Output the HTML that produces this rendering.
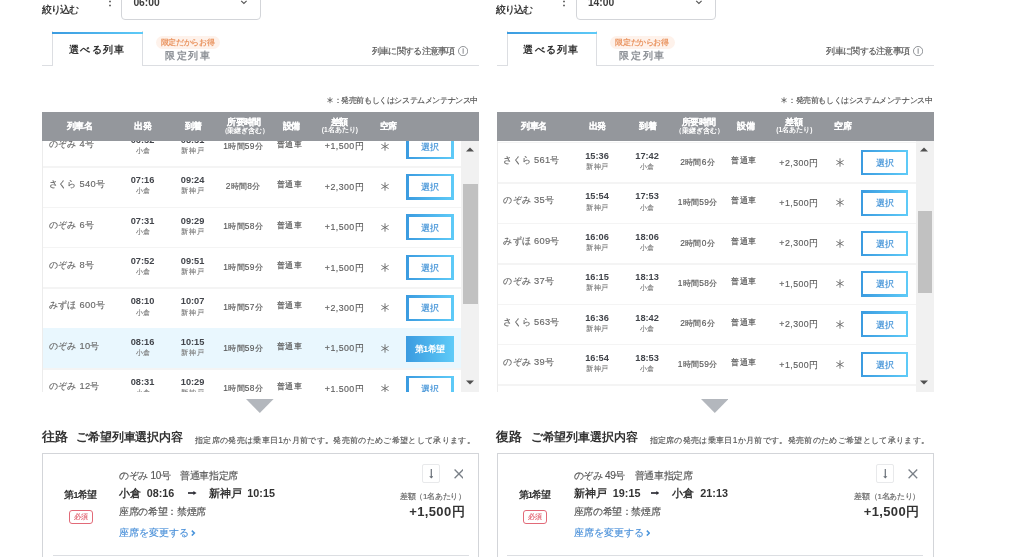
<!DOCTYPE html>
<html lang="ja"><head><meta charset="utf-8"><title>列車選択</title>
<style>
html,body{margin:0;padding:0;background:#fff;width:1024px;height:557px;overflow:hidden;position:relative}
body{font-family:"Liberation Sans",sans-serif}
.t{position:absolute;white-space:nowrap}
.n{-webkit-text-stroke:0.15px currentColor}
.b{position:absolute}
</style></head><body>
<div id="wrap" style="position:absolute;left:0;top:0;width:1024px;height:557px;overflow:hidden;will-change:transform">
<div class="t" style="left:41.50px;top:2.68px;font-size:9.6px;line-height:13.44px;color:#3c3c3c;font-weight:bold;letter-spacing:-0.95px;">絞り込む</div>
<div class="t" style="left:-40.40px;width:300px;text-align:center;top:-4.40px;font-size:10px;line-height:14.00px;color:#444;font-weight:bold;">：</div>
<div class="b" style="left:121.00px;top:-12.00px;width:140.00px;height:31.60px;border:1px solid #d3d5d9;border-radius:4px;box-sizing:border-box;background:#fff"></div>
<div class="t" style="left:133.40px;top:-3.91px;font-size:10.3px;line-height:14.42px;color:#3c3c3c;font-weight:bold;">06:00</div>
<svg class="b" style="left:240.00px;top:-1.2px" width="8" height="6" viewBox="0 0 8 6"><path d="M1.2 1.8 L3.9 4.5 L6.6 1.8" fill="none" stroke="#555" stroke-width="1.1"/></svg>
<div class="b" style="left:42.00px;top:64.60px;width:437.00px;height:1.20px;background:#dcdee2"></div>
<div class="b" style="left:52.20px;top:31.30px;width:90.50px;height:34.50px;background:#fff;border-left:1px solid #dcdee2;border-right:1px solid #dcdee2;box-sizing:border-box"></div>
<div class="b" style="left:52.20px;top:31.50px;width:90.50px;height:2.10px;background:linear-gradient(90deg,#3b9be0,#5ecbf8)"></div>
<div class="t" style="left:-52.88px;width:300px;text-align:center;top:42.82px;font-size:10.4px;line-height:14.56px;color:#333;font-weight:bold;letter-spacing:1.25px;">選べる列車</div>
<div class="b" style="left:155.50px;top:36.20px;width:64.50px;height:13.00px;background:#fef2eb;border-radius:7px"></div>
<div class="t" style="left:37.52px;width:300px;text-align:center;top:37.68px;font-size:7.6px;line-height:10.64px;color:#ea9663;font-weight:bold;letter-spacing:-0.35px;">限定だからお得</div>
<div class="t" style="left:38.20px;width:300px;text-align:center;top:48.92px;font-size:10.4px;line-height:14.56px;color:#8d9197;font-weight:bold;letter-spacing:1.60px;">限定列車</div>
<div class="t n" style="left:154.67px;width:300px;text-align:right;top:45.08px;font-size:8.6px;line-height:12.04px;color:#555;font-weight:normal;letter-spacing:-0.73px;">列車に関する注意事項</div>
<svg class="b" style="left:458.10px;top:45.6px" width="10.2" height="10.2" viewBox="0 0 20 20"><circle cx="10" cy="10" r="9.1" fill="none" stroke="#808388" stroke-width="1.7"/><rect x="9.2" y="4.6" width="1.7" height="10.6" fill="#75787d"/></svg>
<div class="t n" style="left:178.00px;width:300px;text-align:right;top:95.07px;font-size:7.9px;line-height:11.06px;color:#555;font-weight:normal;letter-spacing:-0.40px;">：発売前もしくはシステムメンテナンス中</div>
<svg class="b" style="left:326.80px;top:97.3px" width="6" height="6.4" viewBox="0 0 8 9"><path d="M4 0.3 V8.7 M0.4 2.4 L7.6 6.6 M0.4 6.6 L7.6 2.4" stroke="#555" stroke-width="1.1" fill="none"/></svg>
<div class="b" style="left:42.00px;top:141px;width:437px;height:251px;overflow:hidden">
<div class="b" style="left:0.00px;top:0.00px;width:1.00px;height:251.00px;background:#ececec"></div>
<div class="b" style="left:1.00px;top:25.10px;width:418.00px;height:1.60px;background:#f4f4f4"></div>
<div class="t n" style="left:6.80px;top:-3.11px;font-size:9.3px;line-height:13.02px;color:#686868;font-weight:normal;letter-spacing:0.29px;">のぞみ 4号</div>
<div class="t" style="left:-49.50px;width:300px;text-align:center;top:-7.18px;font-size:9.25px;line-height:12.95px;color:#43464c;font-weight:bold;">06:52</div>
<div class="t n" style="left:-49.50px;width:300px;text-align:center;top:4.92px;font-size:7.4px;line-height:10.36px;color:#808080;font-weight:normal;">小倉</div>
<div class="t" style="left:0.60px;width:300px;text-align:center;top:-7.18px;font-size:9.25px;line-height:12.95px;color:#43464c;font-weight:bold;">08:51</div>
<div class="t n" style="left:0.90px;width:300px;text-align:center;top:4.92px;font-size:7.4px;line-height:10.36px;color:#808080;font-weight:normal;letter-spacing:0.60px;">新神戸</div>
<div class="t n" style="left:51.13px;width:300px;text-align:center;top:-0.38px;font-size:8.4px;line-height:11.76px;color:#5a5a5a;font-weight:normal;letter-spacing:0.27px;">1時間59分</div>
<div class="t n" style="left:97.45px;width:300px;text-align:center;top:-2.18px;font-size:8.4px;line-height:11.76px;color:#555;font-weight:normal;letter-spacing:0.30px;">普通車</div>
<div class="t n" style="left:22.15px;width:300px;text-align:right;top:-0.66px;font-size:8.8px;line-height:12.32px;color:#606060;font-weight:normal;letter-spacing:0.45px;">+1,500円</div>
<svg class="b" style="left:339.30px;top:0.80px" width="8" height="9" viewBox="0 0 8 9"><path d="M4 0.3 V8.7 M0.4 2.4 L7.6 6.6 M0.4 6.6 L7.6 2.4" stroke="#666" stroke-width="0.9" fill="none"/></svg>
<div class="b" style="left:364.20px;top:-7.50px;width:47.60px;height:25.80px;background:linear-gradient(90deg,#3b9be0,#5ecbf8)"></div>
<div class="b" style="left:366.60px;top:-5.10px;width:42.80px;height:21.00px;background:#fff"></div>
<div class="t n" style="left:238.00px;width:300px;text-align:center;top:-0.26px;font-size:8.8px;line-height:12.32px;color:#3b8fd6;font-weight:normal;">選択</div>
<div class="b" style="left:1.00px;top:65.50px;width:418.00px;height:1.60px;background:#f4f4f4"></div>
<div class="t n" style="left:6.80px;top:37.29px;font-size:9.3px;line-height:13.02px;color:#686868;font-weight:normal;letter-spacing:0.29px;">さくら 540号</div>
<div class="t" style="left:-49.50px;width:300px;text-align:center;top:33.22px;font-size:9.25px;line-height:12.95px;color:#43464c;font-weight:bold;">07:16</div>
<div class="t n" style="left:-49.50px;width:300px;text-align:center;top:45.32px;font-size:7.4px;line-height:10.36px;color:#808080;font-weight:normal;">小倉</div>
<div class="t" style="left:0.60px;width:300px;text-align:center;top:33.22px;font-size:9.25px;line-height:12.95px;color:#43464c;font-weight:bold;">09:24</div>
<div class="t n" style="left:0.90px;width:300px;text-align:center;top:45.32px;font-size:7.4px;line-height:10.36px;color:#808080;font-weight:normal;letter-spacing:0.60px;">新神戸</div>
<div class="t n" style="left:51.13px;width:300px;text-align:center;top:40.02px;font-size:8.4px;line-height:11.76px;color:#5a5a5a;font-weight:normal;letter-spacing:0.27px;">2時間8分</div>
<div class="t n" style="left:97.45px;width:300px;text-align:center;top:38.22px;font-size:8.4px;line-height:11.76px;color:#555;font-weight:normal;letter-spacing:0.30px;">普通車</div>
<div class="t n" style="left:22.15px;width:300px;text-align:right;top:39.74px;font-size:8.8px;line-height:12.32px;color:#606060;font-weight:normal;letter-spacing:0.45px;">+2,300円</div>
<svg class="b" style="left:339.30px;top:41.20px" width="8" height="9" viewBox="0 0 8 9"><path d="M4 0.3 V8.7 M0.4 2.4 L7.6 6.6 M0.4 6.6 L7.6 2.4" stroke="#666" stroke-width="0.9" fill="none"/></svg>
<div class="b" style="left:364.20px;top:32.90px;width:47.60px;height:25.80px;background:linear-gradient(90deg,#3b9be0,#5ecbf8)"></div>
<div class="b" style="left:366.60px;top:35.30px;width:42.80px;height:21.00px;background:#fff"></div>
<div class="t n" style="left:238.00px;width:300px;text-align:center;top:40.14px;font-size:8.8px;line-height:12.32px;color:#3b8fd6;font-weight:normal;">選択</div>
<div class="b" style="left:1.00px;top:105.90px;width:418.00px;height:1.60px;background:#f4f4f4"></div>
<div class="t n" style="left:6.80px;top:77.69px;font-size:9.3px;line-height:13.02px;color:#686868;font-weight:normal;letter-spacing:0.29px;">のぞみ 6号</div>
<div class="t" style="left:-49.50px;width:300px;text-align:center;top:73.62px;font-size:9.25px;line-height:12.95px;color:#43464c;font-weight:bold;">07:31</div>
<div class="t n" style="left:-49.50px;width:300px;text-align:center;top:85.72px;font-size:7.4px;line-height:10.36px;color:#808080;font-weight:normal;">小倉</div>
<div class="t" style="left:0.60px;width:300px;text-align:center;top:73.62px;font-size:9.25px;line-height:12.95px;color:#43464c;font-weight:bold;">09:29</div>
<div class="t n" style="left:0.90px;width:300px;text-align:center;top:85.72px;font-size:7.4px;line-height:10.36px;color:#808080;font-weight:normal;letter-spacing:0.60px;">新神戸</div>
<div class="t n" style="left:51.13px;width:300px;text-align:center;top:80.42px;font-size:8.4px;line-height:11.76px;color:#5a5a5a;font-weight:normal;letter-spacing:0.27px;">1時間58分</div>
<div class="t n" style="left:97.45px;width:300px;text-align:center;top:78.62px;font-size:8.4px;line-height:11.76px;color:#555;font-weight:normal;letter-spacing:0.30px;">普通車</div>
<div class="t n" style="left:22.15px;width:300px;text-align:right;top:80.14px;font-size:8.8px;line-height:12.32px;color:#606060;font-weight:normal;letter-spacing:0.45px;">+1,500円</div>
<svg class="b" style="left:339.30px;top:81.60px" width="8" height="9" viewBox="0 0 8 9"><path d="M4 0.3 V8.7 M0.4 2.4 L7.6 6.6 M0.4 6.6 L7.6 2.4" stroke="#666" stroke-width="0.9" fill="none"/></svg>
<div class="b" style="left:364.20px;top:73.30px;width:47.60px;height:25.80px;background:linear-gradient(90deg,#3b9be0,#5ecbf8)"></div>
<div class="b" style="left:366.60px;top:75.70px;width:42.80px;height:21.00px;background:#fff"></div>
<div class="t n" style="left:238.00px;width:300px;text-align:center;top:80.54px;font-size:8.8px;line-height:12.32px;color:#3b8fd6;font-weight:normal;">選択</div>
<div class="b" style="left:1.00px;top:146.30px;width:418.00px;height:1.60px;background:#f4f4f4"></div>
<div class="t n" style="left:6.80px;top:118.09px;font-size:9.3px;line-height:13.02px;color:#686868;font-weight:normal;letter-spacing:0.29px;">のぞみ 8号</div>
<div class="t" style="left:-49.50px;width:300px;text-align:center;top:114.03px;font-size:9.25px;line-height:12.95px;color:#43464c;font-weight:bold;">07:52</div>
<div class="t n" style="left:-49.50px;width:300px;text-align:center;top:126.12px;font-size:7.4px;line-height:10.36px;color:#808080;font-weight:normal;">小倉</div>
<div class="t" style="left:0.60px;width:300px;text-align:center;top:114.03px;font-size:9.25px;line-height:12.95px;color:#43464c;font-weight:bold;">09:51</div>
<div class="t n" style="left:0.90px;width:300px;text-align:center;top:126.12px;font-size:7.4px;line-height:10.36px;color:#808080;font-weight:normal;letter-spacing:0.60px;">新神戸</div>
<div class="t n" style="left:51.13px;width:300px;text-align:center;top:120.82px;font-size:8.4px;line-height:11.76px;color:#5a5a5a;font-weight:normal;letter-spacing:0.27px;">1時間59分</div>
<div class="t n" style="left:97.45px;width:300px;text-align:center;top:119.02px;font-size:8.4px;line-height:11.76px;color:#555;font-weight:normal;letter-spacing:0.30px;">普通車</div>
<div class="t n" style="left:22.15px;width:300px;text-align:right;top:120.54px;font-size:8.8px;line-height:12.32px;color:#606060;font-weight:normal;letter-spacing:0.45px;">+1,500円</div>
<svg class="b" style="left:339.30px;top:122.00px" width="8" height="9" viewBox="0 0 8 9"><path d="M4 0.3 V8.7 M0.4 2.4 L7.6 6.6 M0.4 6.6 L7.6 2.4" stroke="#666" stroke-width="0.9" fill="none"/></svg>
<div class="b" style="left:364.20px;top:113.70px;width:47.60px;height:25.80px;background:linear-gradient(90deg,#3b9be0,#5ecbf8)"></div>
<div class="b" style="left:366.60px;top:116.10px;width:42.80px;height:21.00px;background:#fff"></div>
<div class="t n" style="left:238.00px;width:300px;text-align:center;top:120.94px;font-size:8.8px;line-height:12.32px;color:#3b8fd6;font-weight:normal;">選択</div>
<div class="b" style="left:1.00px;top:186.70px;width:418.00px;height:1.60px;background:#f4f4f4"></div>
<div class="t n" style="left:6.80px;top:158.49px;font-size:9.3px;line-height:13.02px;color:#686868;font-weight:normal;letter-spacing:0.29px;">みずほ 600号</div>
<div class="t" style="left:-49.50px;width:300px;text-align:center;top:154.42px;font-size:9.25px;line-height:12.95px;color:#43464c;font-weight:bold;">08:10</div>
<div class="t n" style="left:-49.50px;width:300px;text-align:center;top:166.52px;font-size:7.4px;line-height:10.36px;color:#808080;font-weight:normal;">小倉</div>
<div class="t" style="left:0.60px;width:300px;text-align:center;top:154.42px;font-size:9.25px;line-height:12.95px;color:#43464c;font-weight:bold;">10:07</div>
<div class="t n" style="left:0.90px;width:300px;text-align:center;top:166.52px;font-size:7.4px;line-height:10.36px;color:#808080;font-weight:normal;letter-spacing:0.60px;">新神戸</div>
<div class="t n" style="left:51.13px;width:300px;text-align:center;top:161.22px;font-size:8.4px;line-height:11.76px;color:#5a5a5a;font-weight:normal;letter-spacing:0.27px;">1時間57分</div>
<div class="t n" style="left:97.45px;width:300px;text-align:center;top:159.42px;font-size:8.4px;line-height:11.76px;color:#555;font-weight:normal;letter-spacing:0.30px;">普通車</div>
<div class="t n" style="left:22.15px;width:300px;text-align:right;top:160.94px;font-size:8.8px;line-height:12.32px;color:#606060;font-weight:normal;letter-spacing:0.45px;">+2,300円</div>
<svg class="b" style="left:339.30px;top:162.40px" width="8" height="9" viewBox="0 0 8 9"><path d="M4 0.3 V8.7 M0.4 2.4 L7.6 6.6 M0.4 6.6 L7.6 2.4" stroke="#666" stroke-width="0.9" fill="none"/></svg>
<div class="b" style="left:364.20px;top:154.10px;width:47.60px;height:25.80px;background:linear-gradient(90deg,#3b9be0,#5ecbf8)"></div>
<div class="b" style="left:366.60px;top:156.50px;width:42.80px;height:21.00px;background:#fff"></div>
<div class="t n" style="left:238.00px;width:300px;text-align:center;top:161.34px;font-size:8.8px;line-height:12.32px;color:#3b8fd6;font-weight:normal;">選択</div>
<div class="b" style="left:1.00px;top:187.30px;width:418.00px;height:40.40px;background:#e9f7fe"></div>
<div class="b" style="left:1.00px;top:227.10px;width:418.00px;height:1.60px;background:#f4f4f4"></div>
<div class="t n" style="left:6.80px;top:198.89px;font-size:9.3px;line-height:13.02px;color:#686868;font-weight:normal;letter-spacing:0.29px;">のぞみ 10号</div>
<div class="t" style="left:-49.50px;width:300px;text-align:center;top:194.83px;font-size:9.25px;line-height:12.95px;color:#43464c;font-weight:bold;">08:16</div>
<div class="t n" style="left:-49.50px;width:300px;text-align:center;top:206.92px;font-size:7.4px;line-height:10.36px;color:#808080;font-weight:normal;">小倉</div>
<div class="t" style="left:0.60px;width:300px;text-align:center;top:194.83px;font-size:9.25px;line-height:12.95px;color:#43464c;font-weight:bold;">10:15</div>
<div class="t n" style="left:0.90px;width:300px;text-align:center;top:206.92px;font-size:7.4px;line-height:10.36px;color:#808080;font-weight:normal;letter-spacing:0.60px;">新神戸</div>
<div class="t n" style="left:51.13px;width:300px;text-align:center;top:201.62px;font-size:8.4px;line-height:11.76px;color:#5a5a5a;font-weight:normal;letter-spacing:0.27px;">1時間59分</div>
<div class="t n" style="left:97.45px;width:300px;text-align:center;top:199.82px;font-size:8.4px;line-height:11.76px;color:#555;font-weight:normal;letter-spacing:0.30px;">普通車</div>
<div class="t n" style="left:22.15px;width:300px;text-align:right;top:201.34px;font-size:8.8px;line-height:12.32px;color:#606060;font-weight:normal;letter-spacing:0.45px;">+1,500円</div>
<svg class="b" style="left:339.30px;top:202.80px" width="8" height="9" viewBox="0 0 8 9"><path d="M4 0.3 V8.7 M0.4 2.4 L7.6 6.6 M0.4 6.6 L7.6 2.4" stroke="#666" stroke-width="0.9" fill="none"/></svg>
<div class="b" style="left:364.20px;top:194.50px;width:47.60px;height:26.20px;background:linear-gradient(90deg,#3b9be0,#5ecbf8)"></div>
<div class="t" style="left:237.85px;width:300px;text-align:center;top:202.28px;font-size:8.6px;line-height:12.04px;color:#fff;font-weight:bold;letter-spacing:-0.30px;">第1希望</div>
<div class="b" style="left:1.00px;top:267.50px;width:418.00px;height:1.60px;background:#f4f4f4"></div>
<div class="t n" style="left:6.80px;top:239.29px;font-size:9.3px;line-height:13.02px;color:#686868;font-weight:normal;letter-spacing:0.29px;">のぞみ 12号</div>
<div class="t" style="left:-49.50px;width:300px;text-align:center;top:235.22px;font-size:9.25px;line-height:12.95px;color:#43464c;font-weight:bold;">08:31</div>
<div class="t n" style="left:-49.50px;width:300px;text-align:center;top:247.32px;font-size:7.4px;line-height:10.36px;color:#808080;font-weight:normal;">小倉</div>
<div class="t" style="left:0.60px;width:300px;text-align:center;top:235.22px;font-size:9.25px;line-height:12.95px;color:#43464c;font-weight:bold;">10:29</div>
<div class="t n" style="left:0.90px;width:300px;text-align:center;top:247.32px;font-size:7.4px;line-height:10.36px;color:#808080;font-weight:normal;letter-spacing:0.60px;">新神戸</div>
<div class="t n" style="left:51.13px;width:300px;text-align:center;top:242.02px;font-size:8.4px;line-height:11.76px;color:#5a5a5a;font-weight:normal;letter-spacing:0.27px;">1時間58分</div>
<div class="t n" style="left:97.45px;width:300px;text-align:center;top:240.22px;font-size:8.4px;line-height:11.76px;color:#555;font-weight:normal;letter-spacing:0.30px;">普通車</div>
<div class="t n" style="left:22.15px;width:300px;text-align:right;top:241.74px;font-size:8.8px;line-height:12.32px;color:#606060;font-weight:normal;letter-spacing:0.45px;">+1,500円</div>
<svg class="b" style="left:339.30px;top:243.20px" width="8" height="9" viewBox="0 0 8 9"><path d="M4 0.3 V8.7 M0.4 2.4 L7.6 6.6 M0.4 6.6 L7.6 2.4" stroke="#666" stroke-width="0.9" fill="none"/></svg>
<div class="b" style="left:364.20px;top:234.90px;width:47.60px;height:25.80px;background:linear-gradient(90deg,#3b9be0,#5ecbf8)"></div>
<div class="b" style="left:366.60px;top:237.30px;width:42.80px;height:21.00px;background:#fff"></div>
<div class="t n" style="left:238.00px;width:300px;text-align:center;top:242.14px;font-size:8.8px;line-height:12.32px;color:#3b8fd6;font-weight:normal;">選択</div>
<div class="b" style="left:419.00px;top:0.00px;width:18.00px;height:251.00px;background:#f1f1f1"></div>
<div class="b" style="left:421.00px;top:43.00px;width:14.50px;height:120.20px;background:#c1c1c1"></div>
<svg class="b" style="left:423.6px;top:6px" width="8" height="5" viewBox="0 0 8 5"><path d="M0 4.5 L4 0.5 L8 4.5Z" fill="#505050"/></svg>
<svg class="b" style="left:423.6px;top:239.3px" width="8" height="5" viewBox="0 0 8 5"><path d="M0 0.5 L4 4.5 L8 0.5Z" fill="#505050"/></svg>
</div>
<div class="b" style="left:42.00px;top:111.50px;width:437.00px;height:29.50px;background:#94979c"></div>
<div class="t" style="left:-70.75px;width:300px;text-align:center;top:119.98px;font-size:8.6px;line-height:12.04px;color:#fff;font-weight:bold;letter-spacing:-0.50px;-webkit-text-stroke:0.12px #fff">列車名</div>
<div class="t" style="left:-7.25px;width:300px;text-align:center;top:119.98px;font-size:8.6px;line-height:12.04px;color:#fff;font-weight:bold;letter-spacing:-0.50px;-webkit-text-stroke:0.12px #fff">出発</div>
<div class="t" style="left:43.45px;width:300px;text-align:center;top:119.98px;font-size:8.6px;line-height:12.04px;color:#fff;font-weight:bold;letter-spacing:-0.50px;-webkit-text-stroke:0.12px #fff">到着</div>
<div class="t" style="left:94.10px;width:300px;text-align:center;top:116.08px;font-size:8.6px;line-height:12.04px;color:#fff;font-weight:bold;letter-spacing:-0.60px;-webkit-text-stroke:0.12px #fff">所要時間</div>
<div class="t" style="left:94.77px;width:300px;text-align:center;top:125.67px;font-size:6.9px;line-height:9.66px;color:#fff;font-weight:bold;letter-spacing:-0.07px;">（乗継ぎ含む）</div>
<div class="t" style="left:141.15px;width:300px;text-align:center;top:119.98px;font-size:8.6px;line-height:12.04px;color:#fff;font-weight:bold;letter-spacing:-0.50px;-webkit-text-stroke:0.12px #fff">設備</div>
<div class="t" style="left:189.45px;width:300px;text-align:center;top:116.08px;font-size:8.6px;line-height:12.04px;color:#fff;font-weight:bold;letter-spacing:-0.50px;-webkit-text-stroke:0.12px #fff">差額</div>
<div class="t" style="left:189.90px;width:300px;text-align:center;top:125.38px;font-size:6.6px;line-height:9.24px;color:#fff;font-weight:bold;">(1名あたり)</div>
<div class="t" style="left:238.25px;width:300px;text-align:center;top:119.98px;font-size:8.6px;line-height:12.04px;color:#fff;font-weight:bold;letter-spacing:-0.50px;-webkit-text-stroke:0.12px #fff">空席</div>
<svg class="b" style="left:246.20px;top:398.5px" width="27.6" height="14" viewBox="0 0 27.6 14"><path d="M0 0 L27.6 0 L13.8 14Z" fill="#b3b7bd"/></svg>
<div class="t" style="left:41.80px;top:427.92px;font-size:13.4px;line-height:18.76px;color:#333;font-weight:bold;">往路</div>
<div class="t" style="left:76.30px;top:429.38px;font-size:11.6px;line-height:16.24px;color:#333;font-weight:bold;letter-spacing:-0.16px;">ご希望列車選択内容</div>
<div class="t n" style="left:195.00px;top:434.62px;font-size:8.4px;line-height:11.76px;color:#555;font-weight:normal;letter-spacing:0.33px;">指定席の発売は乗車日1か月前です。発売前のためご希望として承ります。</div>
<div class="b" style="left:42.00px;top:453.00px;width:437.00px;height:120.00px;border:1px solid #d3d5d9;box-sizing:border-box;background:#fff"></div>
<div class="t" style="left:-69.90px;width:300px;text-align:center;top:487.88px;font-size:9.6px;line-height:13.44px;color:#333;font-weight:bold;letter-spacing:-0.80px;">第1希望</div>
<div class="b" style="left:68.70px;top:510.00px;width:24.10px;height:13.60px;border:1px solid #e26a78;border-radius:3px;box-sizing:border-box"></div>
<div class="t n" style="left:-69.25px;width:300px;text-align:center;top:511.90px;font-size:7px;line-height:9.80px;color:#e0606e;font-weight:normal;">必須</div>
<div class="t n" style="left:119.20px;top:469.30px;font-size:10px;line-height:14.00px;color:#555;font-weight:normal;letter-spacing:-0.36px;">のぞみ 10号　普通車指定席</div>
<div class="t" style="left:119.10px;top:485.94px;font-size:10.8px;line-height:15.12px;color:#333;font-weight:bold;">小倉</div>
<div class="t" style="left:146.70px;top:486.44px;font-size:10.8px;line-height:15.12px;color:#333;font-weight:bold;">08:16</div>
<svg class="b" style="left:188.00px;top:491.4px" width="8.6" height="4" viewBox="0 0 8.6 4"><path d="M0 2 H6.6" stroke="#2e2e36" stroke-width="1.7"/><path d="M5.4 0.1 L8.6 2 L5.4 3.9Z" fill="#2e2e36"/></svg>
<div class="t" style="left:208.80px;top:485.94px;font-size:10.8px;line-height:15.12px;color:#333;font-weight:bold;">新神戸</div>
<div class="t" style="left:247.30px;top:486.44px;font-size:10.8px;line-height:15.12px;color:#333;font-weight:bold;">10:15</div>
<div class="t n" style="left:119.20px;top:504.50px;font-size:10px;line-height:14.00px;color:#555;font-weight:normal;letter-spacing:-0.38px;">座席の希望：禁煙席</div>
<div class="t n" style="left:119.20px;top:526.00px;font-size:10px;line-height:14.00px;color:#4a90d9;font-weight:normal;">座席を変更する</div>
<svg class="b" style="left:191.40px;top:529.8px" width="4.4" height="6.2" viewBox="0 0 4.4 6.2"><path d="M0.8 0.6 L3.4 3.1 L0.8 5.6" stroke="#4a95dc" stroke-width="1.5" fill="none"/></svg>
<div class="b" style="left:421.80px;top:464.00px;width:17.90px;height:18.90px;border:1px solid #e8e9eb;border-radius:2px;box-sizing:border-box"></div>
<svg class="b" style="left:428.60px;top:469.2px" width="4.6" height="9.6" viewBox="0 0 4.6 9.6"><path d="M2.3 0 V8" stroke="#6a7078" stroke-width="1.2"/><path d="M0.2 7.2 L2.3 9.6 L4.4 7.2Z" fill="#6a7078"/></svg>
<svg class="b" style="left:453.60px;top:468.8px" width="9.8" height="9.8" viewBox="0 0 10 10"><path d="M0.6 0.6 L9.4 9.4 M9.4 0.6 L0.6 9.4" stroke="#7a8088" stroke-width="1.35"/></svg>
<div class="t n" style="left:165.71px;width:300px;text-align:right;top:491.40px;font-size:8.0px;line-height:11.20px;color:#666;font-weight:normal;letter-spacing:-0.29px;">差額（1名あたり）</div>
<div class="t" style="left:164.98px;width:300px;text-align:right;top:502.50px;font-size:13px;line-height:18.20px;color:#333;font-weight:bold;letter-spacing:0.38px;">+1,500円</div>
<div class="b" style="left:52.70px;top:555.00px;width:416.00px;height:1.00px;background:#dcdee2"></div>
<div class="t" style="left:496.00px;top:2.68px;font-size:9.6px;line-height:13.44px;color:#3c3c3c;font-weight:bold;letter-spacing:-0.95px;">絞り込む</div>
<div class="t" style="left:414.10px;width:300px;text-align:center;top:-4.40px;font-size:10px;line-height:14.00px;color:#444;font-weight:bold;">：</div>
<div class="b" style="left:575.50px;top:-12.00px;width:140.00px;height:31.60px;border:1px solid #d3d5d9;border-radius:4px;box-sizing:border-box;background:#fff"></div>
<div class="t" style="left:587.90px;top:-3.91px;font-size:10.3px;line-height:14.42px;color:#3c3c3c;font-weight:bold;">14:00</div>
<svg class="b" style="left:694.50px;top:-1.2px" width="8" height="6" viewBox="0 0 8 6"><path d="M1.2 1.8 L3.9 4.5 L6.6 1.8" fill="none" stroke="#555" stroke-width="1.1"/></svg>
<div class="b" style="left:496.50px;top:64.60px;width:437.00px;height:1.20px;background:#dcdee2"></div>
<div class="b" style="left:506.70px;top:31.30px;width:90.50px;height:34.50px;background:#fff;border-left:1px solid #dcdee2;border-right:1px solid #dcdee2;box-sizing:border-box"></div>
<div class="b" style="left:506.70px;top:31.50px;width:90.50px;height:2.10px;background:linear-gradient(90deg,#3b9be0,#5ecbf8)"></div>
<div class="t" style="left:401.62px;width:300px;text-align:center;top:42.82px;font-size:10.4px;line-height:14.56px;color:#333;font-weight:bold;letter-spacing:1.25px;">選べる列車</div>
<div class="b" style="left:610.00px;top:36.20px;width:64.50px;height:13.00px;background:#fef2eb;border-radius:7px"></div>
<div class="t" style="left:492.03px;width:300px;text-align:center;top:37.68px;font-size:7.6px;line-height:10.64px;color:#ea9663;font-weight:bold;letter-spacing:-0.35px;">限定だからお得</div>
<div class="t" style="left:492.70px;width:300px;text-align:center;top:48.92px;font-size:10.4px;line-height:14.56px;color:#8d9197;font-weight:bold;letter-spacing:1.60px;">限定列車</div>
<div class="t n" style="left:609.17px;width:300px;text-align:right;top:45.08px;font-size:8.6px;line-height:12.04px;color:#555;font-weight:normal;letter-spacing:-0.73px;">列車に関する注意事項</div>
<svg class="b" style="left:912.60px;top:45.6px" width="10.2" height="10.2" viewBox="0 0 20 20"><circle cx="10" cy="10" r="9.1" fill="none" stroke="#808388" stroke-width="1.7"/><rect x="9.2" y="4.6" width="1.7" height="10.6" fill="#75787d"/></svg>
<div class="t n" style="left:632.50px;width:300px;text-align:right;top:95.07px;font-size:7.9px;line-height:11.06px;color:#555;font-weight:normal;letter-spacing:-0.40px;">：発売前もしくはシステムメンテナンス中</div>
<svg class="b" style="left:781.30px;top:97.3px" width="6" height="6.4" viewBox="0 0 8 9"><path d="M4 0.3 V8.7 M0.4 2.4 L7.6 6.6 M0.4 6.6 L7.6 2.4" stroke="#555" stroke-width="1.1" fill="none"/></svg>
<div class="b" style="left:496.50px;top:141px;width:437px;height:251px;overflow:hidden">
<div class="b" style="left:0.00px;top:0.00px;width:1.00px;height:251.00px;background:#ececec"></div>
<div class="b" style="left:1.00px;top:41.30px;width:418.00px;height:1.60px;background:#f4f4f4"></div>
<div class="b" style="left:1.00px;top:0.90px;width:418.00px;height:1.60px;background:#f4f4f4"></div>
<div class="t n" style="left:6.80px;top:13.09px;font-size:9.3px;line-height:13.02px;color:#686868;font-weight:normal;letter-spacing:0.29px;">さくら 561号</div>
<div class="t" style="left:-49.50px;width:300px;text-align:center;top:9.03px;font-size:9.25px;line-height:12.95px;color:#43464c;font-weight:bold;">15:36</div>
<div class="t n" style="left:-49.20px;width:300px;text-align:center;top:21.12px;font-size:7.4px;line-height:10.36px;color:#808080;font-weight:normal;letter-spacing:0.60px;">新神戸</div>
<div class="t" style="left:0.60px;width:300px;text-align:center;top:9.03px;font-size:9.25px;line-height:12.95px;color:#43464c;font-weight:bold;">17:42</div>
<div class="t n" style="left:0.60px;width:300px;text-align:center;top:21.12px;font-size:7.4px;line-height:10.36px;color:#808080;font-weight:normal;">小倉</div>
<div class="t n" style="left:51.13px;width:300px;text-align:center;top:15.82px;font-size:8.4px;line-height:11.76px;color:#5a5a5a;font-weight:normal;letter-spacing:0.27px;">2時間6分</div>
<div class="t n" style="left:97.45px;width:300px;text-align:center;top:14.02px;font-size:8.4px;line-height:11.76px;color:#555;font-weight:normal;letter-spacing:0.30px;">普通車</div>
<div class="t n" style="left:22.15px;width:300px;text-align:right;top:15.54px;font-size:8.8px;line-height:12.32px;color:#606060;font-weight:normal;letter-spacing:0.45px;">+2,300円</div>
<svg class="b" style="left:339.30px;top:17.00px" width="8" height="9" viewBox="0 0 8 9"><path d="M4 0.3 V8.7 M0.4 2.4 L7.6 6.6 M0.4 6.6 L7.6 2.4" stroke="#666" stroke-width="0.9" fill="none"/></svg>
<div class="b" style="left:364.20px;top:8.70px;width:47.60px;height:25.80px;background:linear-gradient(90deg,#3b9be0,#5ecbf8)"></div>
<div class="b" style="left:366.60px;top:11.10px;width:42.80px;height:21.00px;background:#fff"></div>
<div class="t n" style="left:238.00px;width:300px;text-align:center;top:15.94px;font-size:8.8px;line-height:12.32px;color:#3b8fd6;font-weight:normal;">選択</div>
<div class="b" style="left:1.00px;top:81.70px;width:418.00px;height:1.60px;background:#f4f4f4"></div>
<div class="t n" style="left:6.80px;top:53.49px;font-size:9.3px;line-height:13.02px;color:#686868;font-weight:normal;letter-spacing:0.29px;">のぞみ 35号</div>
<div class="t" style="left:-49.50px;width:300px;text-align:center;top:49.43px;font-size:9.25px;line-height:12.95px;color:#43464c;font-weight:bold;">15:54</div>
<div class="t n" style="left:-49.20px;width:300px;text-align:center;top:61.52px;font-size:7.4px;line-height:10.36px;color:#808080;font-weight:normal;letter-spacing:0.60px;">新神戸</div>
<div class="t" style="left:0.60px;width:300px;text-align:center;top:49.43px;font-size:9.25px;line-height:12.95px;color:#43464c;font-weight:bold;">17:53</div>
<div class="t n" style="left:0.60px;width:300px;text-align:center;top:61.52px;font-size:7.4px;line-height:10.36px;color:#808080;font-weight:normal;">小倉</div>
<div class="t n" style="left:51.13px;width:300px;text-align:center;top:56.22px;font-size:8.4px;line-height:11.76px;color:#5a5a5a;font-weight:normal;letter-spacing:0.27px;">1時間59分</div>
<div class="t n" style="left:97.45px;width:300px;text-align:center;top:54.42px;font-size:8.4px;line-height:11.76px;color:#555;font-weight:normal;letter-spacing:0.30px;">普通車</div>
<div class="t n" style="left:22.15px;width:300px;text-align:right;top:55.94px;font-size:8.8px;line-height:12.32px;color:#606060;font-weight:normal;letter-spacing:0.45px;">+1,500円</div>
<svg class="b" style="left:339.30px;top:57.40px" width="8" height="9" viewBox="0 0 8 9"><path d="M4 0.3 V8.7 M0.4 2.4 L7.6 6.6 M0.4 6.6 L7.6 2.4" stroke="#666" stroke-width="0.9" fill="none"/></svg>
<div class="b" style="left:364.20px;top:49.10px;width:47.60px;height:25.80px;background:linear-gradient(90deg,#3b9be0,#5ecbf8)"></div>
<div class="b" style="left:366.60px;top:51.50px;width:42.80px;height:21.00px;background:#fff"></div>
<div class="t n" style="left:238.00px;width:300px;text-align:center;top:56.34px;font-size:8.8px;line-height:12.32px;color:#3b8fd6;font-weight:normal;">選択</div>
<div class="b" style="left:1.00px;top:122.10px;width:418.00px;height:1.60px;background:#f4f4f4"></div>
<div class="t n" style="left:6.80px;top:93.89px;font-size:9.3px;line-height:13.02px;color:#686868;font-weight:normal;letter-spacing:0.29px;">みずほ 609号</div>
<div class="t" style="left:-49.50px;width:300px;text-align:center;top:89.83px;font-size:9.25px;line-height:12.95px;color:#43464c;font-weight:bold;">16:06</div>
<div class="t n" style="left:-49.20px;width:300px;text-align:center;top:101.92px;font-size:7.4px;line-height:10.36px;color:#808080;font-weight:normal;letter-spacing:0.60px;">新神戸</div>
<div class="t" style="left:0.60px;width:300px;text-align:center;top:89.83px;font-size:9.25px;line-height:12.95px;color:#43464c;font-weight:bold;">18:06</div>
<div class="t n" style="left:0.60px;width:300px;text-align:center;top:101.92px;font-size:7.4px;line-height:10.36px;color:#808080;font-weight:normal;">小倉</div>
<div class="t n" style="left:51.13px;width:300px;text-align:center;top:96.62px;font-size:8.4px;line-height:11.76px;color:#5a5a5a;font-weight:normal;letter-spacing:0.27px;">2時間0分</div>
<div class="t n" style="left:97.45px;width:300px;text-align:center;top:94.82px;font-size:8.4px;line-height:11.76px;color:#555;font-weight:normal;letter-spacing:0.30px;">普通車</div>
<div class="t n" style="left:22.15px;width:300px;text-align:right;top:96.34px;font-size:8.8px;line-height:12.32px;color:#606060;font-weight:normal;letter-spacing:0.45px;">+2,300円</div>
<svg class="b" style="left:339.30px;top:97.80px" width="8" height="9" viewBox="0 0 8 9"><path d="M4 0.3 V8.7 M0.4 2.4 L7.6 6.6 M0.4 6.6 L7.6 2.4" stroke="#666" stroke-width="0.9" fill="none"/></svg>
<div class="b" style="left:364.20px;top:89.50px;width:47.60px;height:25.80px;background:linear-gradient(90deg,#3b9be0,#5ecbf8)"></div>
<div class="b" style="left:366.60px;top:91.90px;width:42.80px;height:21.00px;background:#fff"></div>
<div class="t n" style="left:238.00px;width:300px;text-align:center;top:96.74px;font-size:8.8px;line-height:12.32px;color:#3b8fd6;font-weight:normal;">選択</div>
<div class="b" style="left:1.00px;top:162.50px;width:418.00px;height:1.60px;background:#f4f4f4"></div>
<div class="t n" style="left:6.80px;top:134.29px;font-size:9.3px;line-height:13.02px;color:#686868;font-weight:normal;letter-spacing:0.29px;">のぞみ 37号</div>
<div class="t" style="left:-49.50px;width:300px;text-align:center;top:130.22px;font-size:9.25px;line-height:12.95px;color:#43464c;font-weight:bold;">16:15</div>
<div class="t n" style="left:-49.20px;width:300px;text-align:center;top:142.32px;font-size:7.4px;line-height:10.36px;color:#808080;font-weight:normal;letter-spacing:0.60px;">新神戸</div>
<div class="t" style="left:0.60px;width:300px;text-align:center;top:130.22px;font-size:9.25px;line-height:12.95px;color:#43464c;font-weight:bold;">18:13</div>
<div class="t n" style="left:0.60px;width:300px;text-align:center;top:142.32px;font-size:7.4px;line-height:10.36px;color:#808080;font-weight:normal;">小倉</div>
<div class="t n" style="left:51.13px;width:300px;text-align:center;top:137.02px;font-size:8.4px;line-height:11.76px;color:#5a5a5a;font-weight:normal;letter-spacing:0.27px;">1時間58分</div>
<div class="t n" style="left:97.45px;width:300px;text-align:center;top:135.22px;font-size:8.4px;line-height:11.76px;color:#555;font-weight:normal;letter-spacing:0.30px;">普通車</div>
<div class="t n" style="left:22.15px;width:300px;text-align:right;top:136.74px;font-size:8.8px;line-height:12.32px;color:#606060;font-weight:normal;letter-spacing:0.45px;">+1,500円</div>
<svg class="b" style="left:339.30px;top:138.20px" width="8" height="9" viewBox="0 0 8 9"><path d="M4 0.3 V8.7 M0.4 2.4 L7.6 6.6 M0.4 6.6 L7.6 2.4" stroke="#666" stroke-width="0.9" fill="none"/></svg>
<div class="b" style="left:364.20px;top:129.90px;width:47.60px;height:25.80px;background:linear-gradient(90deg,#3b9be0,#5ecbf8)"></div>
<div class="b" style="left:366.60px;top:132.30px;width:42.80px;height:21.00px;background:#fff"></div>
<div class="t n" style="left:238.00px;width:300px;text-align:center;top:137.14px;font-size:8.8px;line-height:12.32px;color:#3b8fd6;font-weight:normal;">選択</div>
<div class="b" style="left:1.00px;top:202.90px;width:418.00px;height:1.60px;background:#f4f4f4"></div>
<div class="t n" style="left:6.80px;top:174.69px;font-size:9.3px;line-height:13.02px;color:#686868;font-weight:normal;letter-spacing:0.29px;">さくら 563号</div>
<div class="t" style="left:-49.50px;width:300px;text-align:center;top:170.63px;font-size:9.25px;line-height:12.95px;color:#43464c;font-weight:bold;">16:36</div>
<div class="t n" style="left:-49.20px;width:300px;text-align:center;top:182.72px;font-size:7.4px;line-height:10.36px;color:#808080;font-weight:normal;letter-spacing:0.60px;">新神戸</div>
<div class="t" style="left:0.60px;width:300px;text-align:center;top:170.63px;font-size:9.25px;line-height:12.95px;color:#43464c;font-weight:bold;">18:42</div>
<div class="t n" style="left:0.60px;width:300px;text-align:center;top:182.72px;font-size:7.4px;line-height:10.36px;color:#808080;font-weight:normal;">小倉</div>
<div class="t n" style="left:51.13px;width:300px;text-align:center;top:177.42px;font-size:8.4px;line-height:11.76px;color:#5a5a5a;font-weight:normal;letter-spacing:0.27px;">2時間6分</div>
<div class="t n" style="left:97.45px;width:300px;text-align:center;top:175.62px;font-size:8.4px;line-height:11.76px;color:#555;font-weight:normal;letter-spacing:0.30px;">普通車</div>
<div class="t n" style="left:22.15px;width:300px;text-align:right;top:177.14px;font-size:8.8px;line-height:12.32px;color:#606060;font-weight:normal;letter-spacing:0.45px;">+2,300円</div>
<svg class="b" style="left:339.30px;top:178.60px" width="8" height="9" viewBox="0 0 8 9"><path d="M4 0.3 V8.7 M0.4 2.4 L7.6 6.6 M0.4 6.6 L7.6 2.4" stroke="#666" stroke-width="0.9" fill="none"/></svg>
<div class="b" style="left:364.20px;top:170.30px;width:47.60px;height:25.80px;background:linear-gradient(90deg,#3b9be0,#5ecbf8)"></div>
<div class="b" style="left:366.60px;top:172.70px;width:42.80px;height:21.00px;background:#fff"></div>
<div class="t n" style="left:238.00px;width:300px;text-align:center;top:177.54px;font-size:8.8px;line-height:12.32px;color:#3b8fd6;font-weight:normal;">選択</div>
<div class="b" style="left:1.00px;top:243.30px;width:418.00px;height:1.60px;background:#f4f4f4"></div>
<div class="t n" style="left:6.80px;top:215.09px;font-size:9.3px;line-height:13.02px;color:#686868;font-weight:normal;letter-spacing:0.29px;">のぞみ 39号</div>
<div class="t" style="left:-49.50px;width:300px;text-align:center;top:211.03px;font-size:9.25px;line-height:12.95px;color:#43464c;font-weight:bold;">16:54</div>
<div class="t n" style="left:-49.20px;width:300px;text-align:center;top:223.12px;font-size:7.4px;line-height:10.36px;color:#808080;font-weight:normal;letter-spacing:0.60px;">新神戸</div>
<div class="t" style="left:0.60px;width:300px;text-align:center;top:211.03px;font-size:9.25px;line-height:12.95px;color:#43464c;font-weight:bold;">18:53</div>
<div class="t n" style="left:0.60px;width:300px;text-align:center;top:223.12px;font-size:7.4px;line-height:10.36px;color:#808080;font-weight:normal;">小倉</div>
<div class="t n" style="left:51.13px;width:300px;text-align:center;top:217.82px;font-size:8.4px;line-height:11.76px;color:#5a5a5a;font-weight:normal;letter-spacing:0.27px;">1時間59分</div>
<div class="t n" style="left:97.45px;width:300px;text-align:center;top:216.02px;font-size:8.4px;line-height:11.76px;color:#555;font-weight:normal;letter-spacing:0.30px;">普通車</div>
<div class="t n" style="left:22.15px;width:300px;text-align:right;top:217.54px;font-size:8.8px;line-height:12.32px;color:#606060;font-weight:normal;letter-spacing:0.45px;">+1,500円</div>
<svg class="b" style="left:339.30px;top:219.00px" width="8" height="9" viewBox="0 0 8 9"><path d="M4 0.3 V8.7 M0.4 2.4 L7.6 6.6 M0.4 6.6 L7.6 2.4" stroke="#666" stroke-width="0.9" fill="none"/></svg>
<div class="b" style="left:364.20px;top:210.70px;width:47.60px;height:25.80px;background:linear-gradient(90deg,#3b9be0,#5ecbf8)"></div>
<div class="b" style="left:366.60px;top:213.10px;width:42.80px;height:21.00px;background:#fff"></div>
<div class="t n" style="left:238.00px;width:300px;text-align:center;top:217.94px;font-size:8.8px;line-height:12.32px;color:#3b8fd6;font-weight:normal;">選択</div>
<div class="b" style="left:419.00px;top:0.00px;width:18.00px;height:251.00px;background:#f1f1f1"></div>
<div class="b" style="left:421.00px;top:70.00px;width:14.50px;height:82.20px;background:#c1c1c1"></div>
<svg class="b" style="left:423.6px;top:6px" width="8" height="5" viewBox="0 0 8 5"><path d="M0 4.5 L4 0.5 L8 4.5Z" fill="#505050"/></svg>
<svg class="b" style="left:423.6px;top:239.3px" width="8" height="5" viewBox="0 0 8 5"><path d="M0 0.5 L4 4.5 L8 0.5Z" fill="#505050"/></svg>
</div>
<div class="b" style="left:496.50px;top:111.50px;width:437.00px;height:29.50px;background:#94979c"></div>
<div class="t" style="left:383.75px;width:300px;text-align:center;top:119.98px;font-size:8.6px;line-height:12.04px;color:#fff;font-weight:bold;letter-spacing:-0.50px;-webkit-text-stroke:0.12px #fff">列車名</div>
<div class="t" style="left:447.25px;width:300px;text-align:center;top:119.98px;font-size:8.6px;line-height:12.04px;color:#fff;font-weight:bold;letter-spacing:-0.50px;-webkit-text-stroke:0.12px #fff">出発</div>
<div class="t" style="left:497.95px;width:300px;text-align:center;top:119.98px;font-size:8.6px;line-height:12.04px;color:#fff;font-weight:bold;letter-spacing:-0.50px;-webkit-text-stroke:0.12px #fff">到着</div>
<div class="t" style="left:548.60px;width:300px;text-align:center;top:116.08px;font-size:8.6px;line-height:12.04px;color:#fff;font-weight:bold;letter-spacing:-0.60px;-webkit-text-stroke:0.12px #fff">所要時間</div>
<div class="t" style="left:549.26px;width:300px;text-align:center;top:125.67px;font-size:6.9px;line-height:9.66px;color:#fff;font-weight:bold;letter-spacing:-0.07px;">（乗継ぎ含む）</div>
<div class="t" style="left:595.65px;width:300px;text-align:center;top:119.98px;font-size:8.6px;line-height:12.04px;color:#fff;font-weight:bold;letter-spacing:-0.50px;-webkit-text-stroke:0.12px #fff">設備</div>
<div class="t" style="left:643.95px;width:300px;text-align:center;top:116.08px;font-size:8.6px;line-height:12.04px;color:#fff;font-weight:bold;letter-spacing:-0.50px;-webkit-text-stroke:0.12px #fff">差額</div>
<div class="t" style="left:644.40px;width:300px;text-align:center;top:125.38px;font-size:6.6px;line-height:9.24px;color:#fff;font-weight:bold;">(1名あたり)</div>
<div class="t" style="left:692.75px;width:300px;text-align:center;top:119.98px;font-size:8.6px;line-height:12.04px;color:#fff;font-weight:bold;letter-spacing:-0.50px;-webkit-text-stroke:0.12px #fff">空席</div>
<svg class="b" style="left:700.70px;top:398.5px" width="27.6" height="14" viewBox="0 0 27.6 14"><path d="M0 0 L27.6 0 L13.8 14Z" fill="#b3b7bd"/></svg>
<div class="t" style="left:496.30px;top:427.92px;font-size:13.4px;line-height:18.76px;color:#333;font-weight:bold;">復路</div>
<div class="t" style="left:530.80px;top:429.38px;font-size:11.6px;line-height:16.24px;color:#333;font-weight:bold;letter-spacing:-0.16px;">ご希望列車選択内容</div>
<div class="t n" style="left:649.50px;top:434.62px;font-size:8.4px;line-height:11.76px;color:#555;font-weight:normal;letter-spacing:0.33px;">指定席の発売は乗車日1か月前です。発売前のためご希望として承ります。</div>
<div class="b" style="left:496.50px;top:453.00px;width:437.00px;height:120.00px;border:1px solid #d3d5d9;box-sizing:border-box;background:#fff"></div>
<div class="t" style="left:384.60px;width:300px;text-align:center;top:487.88px;font-size:9.6px;line-height:13.44px;color:#333;font-weight:bold;letter-spacing:-0.80px;">第1希望</div>
<div class="b" style="left:523.20px;top:510.00px;width:24.10px;height:13.60px;border:1px solid #e26a78;border-radius:3px;box-sizing:border-box"></div>
<div class="t n" style="left:385.25px;width:300px;text-align:center;top:511.90px;font-size:7px;line-height:9.80px;color:#e0606e;font-weight:normal;">必須</div>
<div class="t n" style="left:573.70px;top:469.30px;font-size:10px;line-height:14.00px;color:#555;font-weight:normal;letter-spacing:-0.36px;">のぞみ 49号　普通車指定席</div>
<div class="t" style="left:573.60px;top:485.94px;font-size:10.8px;line-height:15.12px;color:#333;font-weight:bold;">新神戸</div>
<div class="t" style="left:612.80px;top:486.44px;font-size:10.8px;line-height:15.12px;color:#333;font-weight:bold;">19:15</div>
<svg class="b" style="left:650.90px;top:491.4px" width="8.6" height="4" viewBox="0 0 8.6 4"><path d="M0 2 H6.6" stroke="#2e2e36" stroke-width="1.7"/><path d="M5.4 0.1 L8.6 2 L5.4 3.9Z" fill="#2e2e36"/></svg>
<div class="t" style="left:672.30px;top:485.94px;font-size:10.8px;line-height:15.12px;color:#333;font-weight:bold;">小倉</div>
<div class="t" style="left:700.30px;top:486.44px;font-size:10.8px;line-height:15.12px;color:#333;font-weight:bold;">21:13</div>
<div class="t n" style="left:573.70px;top:504.50px;font-size:10px;line-height:14.00px;color:#555;font-weight:normal;letter-spacing:-0.38px;">座席の希望：禁煙席</div>
<div class="t n" style="left:573.70px;top:526.00px;font-size:10px;line-height:14.00px;color:#4a90d9;font-weight:normal;">座席を変更する</div>
<svg class="b" style="left:645.90px;top:529.8px" width="4.4" height="6.2" viewBox="0 0 4.4 6.2"><path d="M0.8 0.6 L3.4 3.1 L0.8 5.6" stroke="#4a95dc" stroke-width="1.5" fill="none"/></svg>
<div class="b" style="left:876.30px;top:464.00px;width:17.90px;height:18.90px;border:1px solid #e8e9eb;border-radius:2px;box-sizing:border-box"></div>
<svg class="b" style="left:883.10px;top:469.2px" width="4.6" height="9.6" viewBox="0 0 4.6 9.6"><path d="M2.3 0 V8" stroke="#6a7078" stroke-width="1.2"/><path d="M0.2 7.2 L2.3 9.6 L4.4 7.2Z" fill="#6a7078"/></svg>
<svg class="b" style="left:908.10px;top:468.8px" width="9.8" height="9.8" viewBox="0 0 10 10"><path d="M0.6 0.6 L9.4 9.4 M9.4 0.6 L0.6 9.4" stroke="#7a8088" stroke-width="1.35"/></svg>
<div class="t n" style="left:620.21px;width:300px;text-align:right;top:491.40px;font-size:8.0px;line-height:11.20px;color:#666;font-weight:normal;letter-spacing:-0.29px;">差額（1名あたり）</div>
<div class="t" style="left:619.48px;width:300px;text-align:right;top:502.50px;font-size:13px;line-height:18.20px;color:#333;font-weight:bold;letter-spacing:0.38px;">+1,500円</div>
<div class="b" style="left:507.20px;top:555.00px;width:416.00px;height:1.00px;background:#dcdee2"></div>
</div>
</body></html>
